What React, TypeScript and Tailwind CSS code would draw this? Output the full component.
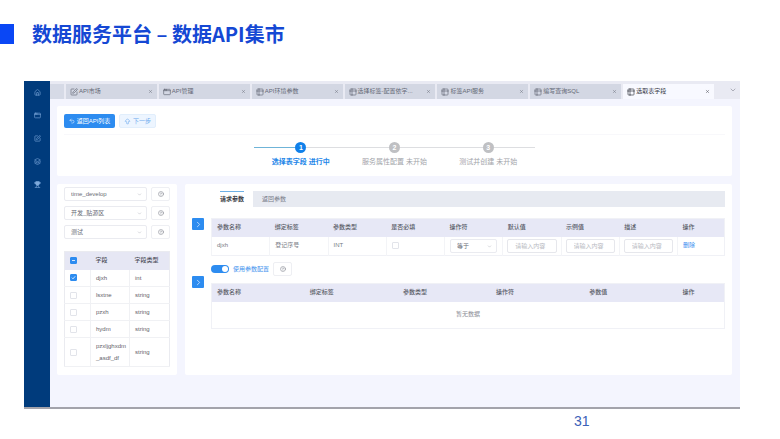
import React, { useState } from "react";
import {
  ArrowBigUp,
  AppWindow,
  ChevronDown,
  ChevronRight,
  CircleHelp,
  House,
  Layers,
  SquarePen,
  Table2,
  Trophy,
  Undo2,
  X,
} from "lucide-react";

const tabs = [
  { label: "API市场", icon: SquarePen },
  { label: "API管理", icon: AppWindow },
  { label: "API环境参数", icon: Table2 },
  { label: "选择标签-配置依字...", icon: Table2 },
  { label: "标签API服务", icon: Table2 },
  { label: "编写查询SQL", icon: Table2 },
  { label: "选取表字段", icon: Table2 },
];

const menus = [
  { label: "首页", icon: House },
  { label: "数据管理", icon: AppWindow },
  { label: "API市场", icon: SquarePen },
  { label: "服务", icon: Layers },
  { label: "应用", icon: Trophy },
];

const steps = [
  { title: "选择表字段", status: "进行中" },
  { title: "服务属性配置", status: "未开始" },
  { title: "测试并创建", status: "未开始" },
];

const sources = ["time_develop", "开发_贴源区", "测试"];

const fields = [
  { name: "djxh", type: "int" },
  { name: "lsxtne", type: "string" },
  { name: "pzxh", type: "string" },
  { name: "hydm", type: "string" },
  { name: "pzxljghxdm", suffix: "_asdf_df", type: "string" },
];

const requestHeads = [
  "参数名称",
  "绑定标签",
  "参数类型",
  "是否必填",
  "操作符",
  "默认值",
  "示例值",
  "描述",
  "操作",
];

const extraHeads = ["参数名称", "绑定标签", "参数类型", "操作符", "参数值", "操作"];

const HelpButton = () => (
  <button
    aria-label="帮助"
    className="flex h-[14px] w-[19px] shrink-0 items-center justify-center rounded-xs border border-[#eeeff3] bg-white text-[#777b84]"
  >
    <CircleHelp size={6} />
  </button>
);

const SelectBox: React.FC<{ label: string; value: string }> = ({
  label,
  value,
}) => (
  <div className="relative min-w-0 flex-1">
    <select
      aria-label={label}
      defaultValue={value}
      className="block h-[14px] w-full appearance-none rounded-xs border border-[#eaebf0] bg-white pl-[6px] text-[6px] leading-[12px] text-[#6a6d76]"
    >
      <option>{value}</option>
    </select>
    <ChevronDown
      size={5}
      className="pointer-events-none absolute top-[5px] right-[5px] text-[#a3a6af]"
    />
  </div>
);

const CheckBox: React.FC<{
  label: string;
  checked?: boolean;
  partial?: boolean;
}> = ({ label, checked = false, partial = false }) => (
  <span className="relative block size-[7px]">
    <input
      type="checkbox"
      aria-label={label}
      defaultChecked={checked}
      className="peer block size-[7px] appearance-none rounded-[1px] border border-[#e2e4ea] bg-white checked:border-[#2d8cf0] checked:bg-[#2d8cf0]"
    />
    <svg
      viewBox="0 0 7 7"
      className="pointer-events-none absolute inset-0 hidden size-[7px] peer-checked:block"
    >
      <path
        d={partial ? "M2 3.5h3" : "M1.8 3.6 3 4.8l2.2-2.5"}
        fill="none"
        stroke="#fff"
        strokeWidth="0.8"
      />
    </svg>
  </span>
);

const ExpandButton: React.FC<{ label: string }> = ({ label }) => (
  <button
    aria-label={label}
    className="flex size-3 items-center justify-center rounded-[1px] bg-[#2d8cf0] text-[#d5e9ff]"
  >
    <ChevronRight size={9} />
  </button>
);

const TabBar = () => {
  const [active, setActive] = useState(6);

  return (
    <div className="flex h-[15px] gap-[2px] bg-[#e9eaf3]">
      <div className="w-[14px] bg-[#d6dae6]" />
      {tabs.map((tab, i) => {
        const Icon = tab.icon;
        return (
          <div
            key={tab.label}
            className={`flex min-w-0 flex-1 items-center pr-1 pl-1 ${
              i === active
                ? "bg-[#f8f9ff] text-[#33363f]"
                : "bg-[#d3d7e3] text-[#636875]"
            }`}
          >
            <button
              onClick={() => setActive(i)}
              className="flex min-w-0 flex-1 items-center gap-px whitespace-nowrap"
            >
              <Icon size={8} className="shrink-0" />
              {tab.label}
            </button>
            <button aria-label={`关闭${tab.label}`}>
              <X size={5} />
            </button>
          </div>
        );
      })}
      <button
        aria-label="更多标签"
        className="flex w-6 items-start justify-center pt-[2px] pl-[10px] text-[#8d909b]"
      >
        <ChevronDown size={8} />
      </button>
    </div>
  );
};

const StepPanel = () => (
  <section className="rounded-xs bg-white px-[7px] pt-2 pb-2">
    <div className="flex gap-1 border-b border-[#f8f8fb] pb-[6px]">
      <button className="flex h-[14px] w-[51px] items-center justify-center gap-[2px] rounded-xs bg-[#2d8cf0] whitespace-nowrap text-white">
        <Undo2 size={6} />
        返回API列表
      </button>
      <button className="flex h-[14px] w-[37px] items-center justify-center gap-[2px] rounded-xs border border-[#e1eefc] bg-[#edf5ff] whitespace-nowrap text-[#6ba9ee]">
        <ArrowBigUp size={7} />
        下一步
      </button>
    </div>
    <ol className="mx-auto mt-[7px] flex w-5/12 min-w-[281px]">
      {steps.map((step, i) => (
        <li key={step.title} className="flex-1 whitespace-nowrap">
          <div className="flex items-center">
            <span
              className={`h-px flex-1 ${i === 0 ? "bg-[#6fb4d8]" : "bg-[#dddee1]"}`}
            />
            <span
              className={`flex size-[11px] items-center justify-center rounded-full text-[7px] font-bold text-white ${
                i === 0 ? "bg-[#1080ea]" : "bg-[#bfc0c3]"
              }`}
            >
              {i + 1}
            </span>
            <span className="h-px flex-1 bg-[#dddee1]" />
          </div>
          <p
            className={`mt-1 mb-px text-center text-[7px] leading-[10px] ${
              i === 0 ? "font-bold text-[#2386e8]" : "text-[#a2a4a9]"
            }`}
          >
            {step.title} {step.status}
          </p>
        </li>
      ))}
    </ol>
  </section>
);

const FieldPanel = () => (
  <section className="w-[120px] shrink-0 rounded-xs bg-white px-[7px] pt-[3px] pb-2">
    <div className="flex flex-col gap-[5px]">
      {sources.map((source) => (
        <div key={source} className="flex gap-1">
          <SelectBox label="数据源" value={source} />
          <HelpButton />
        </div>
      ))}
    </div>
    <table className="mt-3 w-full table-fixed border border-[#eaebf0] text-left text-[#5f626b]">
      <thead>
        <tr className="h-[18px] bg-[#e6e7f4] text-[#4c4f59]">
          <th className="w-[26px] pl-[5px]">
            <CheckBox label="全选" checked partial />
          </th>
          <th className="w-[39px] pl-[5px] font-medium">字段</th>
          <th className="pl-[5px] font-medium">字段类型</th>
        </tr>
      </thead>
      <tbody>
        {fields.map((field, i) => (
          <tr
            key={field.name}
            className="h-[17px] border-b border-[#f0f1f4] leading-3"
          >
            <td className="pl-[5px]">
              <CheckBox label={field.name} checked={i === 0} />
            </td>
            <td className="border-l border-[#f0f1f4] py-[2px] pl-[5px]">
              {field.name}
              <wbr />
              {field.suffix}
            </td>
            <td className="border-l border-[#f0f1f4] pl-[5px]">{field.type}</td>
          </tr>
        ))}
      </tbody>
    </table>
  </section>
);

const RequestTable = () => (
  <table className="w-full table-fixed border border-[#f0f1f6] text-left text-[#777a83]">
    <thead>
      <tr className="h-[18px] bg-[#e7e8f6] text-[#585b66]">
        {requestHeads.map((head, i) => (
          <th
            key={head}
            className={`pl-[5px] font-medium ${i === 8 ? "w-[47px]" : ""}`}
          >
            {head}
          </th>
        ))}
      </tr>
    </thead>
    <tbody>
      <tr className="h-[19px] *:border-l *:border-[#f3f4f7]">
        <td className="pl-[5px]">djxh</td>
        <td className="pl-[5px]">登记序号</td>
        <td className="pl-[5px]">INT</td>
        <td className="pl-[5px]">
          <CheckBox label="是否必填" />
        </td>
        <td className="px-[5px]">
          <SelectBox label="操作符" value="等于" />
        </td>
        {["默认值", "示例值", "描述"].map((name) => (
          <td key={name} className="px-1">
            <input
              aria-label={name}
              placeholder="请输入内容"
              className="block h-[14px] w-full rounded-xs border border-[#e6e7ec] px-[7px] placeholder:text-[#b7b9c1]"
            />
          </td>
        ))}
        <td className="pl-[5px]">
          <button className="text-[#3d91f0]">删除</button>
        </td>
      </tr>
    </tbody>
  </table>
);

const ExtraTable = () => (
  <table className="w-full table-fixed border border-[#f0f1f6] text-left">
    <thead>
      <tr className="h-[18px] bg-[#e7e8f6] text-[#585b66]">
        {extraHeads.map((head, i) => (
          <th
            key={head}
            className={`pl-[5px] font-medium ${i === 5 ? "w-[47px]" : ""}`}
          >
            {head}
          </th>
        ))}
      </tr>
    </thead>
    <tbody>
      <tr className="h-[27px]">
        <td colSpan={6} className="text-center text-[#8a8c94]">
          暂无数据
        </td>
      </tr>
    </tbody>
  </table>
);

const ParamPanel = () => {
  const [enabled, setEnabled] = useState(true);

  return (
    <section className="min-w-0 flex-1 rounded-xs bg-white px-[7px] pt-[7px]">
      <div className="ml-[19px] flex h-4 text-[#777b88]">
        <button className="mx-[9px] border-t border-[#6fb1e6] font-bold text-[#363943]">
          请求参数
        </button>
        <button className="flex-1 bg-[#e7eaf1] pl-[9px] text-left">
          返回参数
        </button>
      </div>
      <div className="mt-[11px] flex items-start gap-[7px]">
        <ExpandButton label="展开请求参数" />
        <div className="min-w-0 flex-1">
          <RequestTable />
        </div>
      </div>
      <div className="mt-[6px] ml-[19px] flex items-center gap-1">
        <label className="flex items-center gap-1 text-[#3c91ee]">
          <span className="relative block h-[8px] w-[18px]">
            <input
              type="checkbox"
              role="switch"
              checked={enabled}
              onChange={(e) => setEnabled(e.target.checked)}
              className="peer block h-[8px] w-[18px] appearance-none rounded-full bg-[#c5c8ce] checked:bg-[#2d8cf0]"
            />
            <span className="pointer-events-none absolute top-px left-px size-[6px] rounded-full bg-white peer-checked:left-[11px]" />
          </span>
          使用参数配置
        </label>
        <HelpButton />
      </div>
      <div className="flex items-start gap-[7px]">
        <ExpandButton label="展开参数配置" />
        <div className="mt-[7px] min-w-0 flex-1">
          <ExtraTable />
        </div>
      </div>
    </section>
  );
};

const App = () => (
  <div className="min-h-screen bg-white font-['Liberation_Sans','Noto_Sans_CJK_SC',sans-serif]">
    <header className="flex items-center gap-[18px] pt-[18px]">
      <span className="h-5 w-[14px] bg-[#0a47f5]" />
      <h1 className="font-['Noto_Sans_CJK_SC',sans-serif] text-[20px] leading-8 font-bold text-[#1548d4]">
        数据服务平台 – 数据API集市
      </h1>
    </header>

    <div className="mt-[31px] mr-10 ml-6 flex border-b-2 border-[#a3a3ab] bg-[#f4f5fe] text-[6px] leading-[9px]">
      <nav className="flex w-[26px] shrink-0 flex-col items-center gap-4 bg-[#003b7c] pt-2 text-[#7fabdc]">
        {menus.map(({ label, icon: Icon }) => (
          <a key={label} href="#" aria-label={label}>
            <Icon
              size={7}
              className={Icon === Trophy ? "fill-current" : ""}
            />
          </a>
        ))}
      </nav>
      <main className="min-w-0 flex-1">
        <div className="bg-[#e9eaf3] pt-[3px]">
          <TabBar />
        </div>
        <div className="flex flex-col gap-2 pt-[7px] pr-2 pb-8 pl-[7px]">
          <StepPanel />
          <div className="flex gap-2">
            <FieldPanel />
            <ParamPanel />
          </div>
        </div>
      </main>
    </div>

    <footer className="pt-1 pl-[574px] text-[14px] leading-4 text-[#3c62b8]">
      31
    </footer>
  </div>
);

export default App;
